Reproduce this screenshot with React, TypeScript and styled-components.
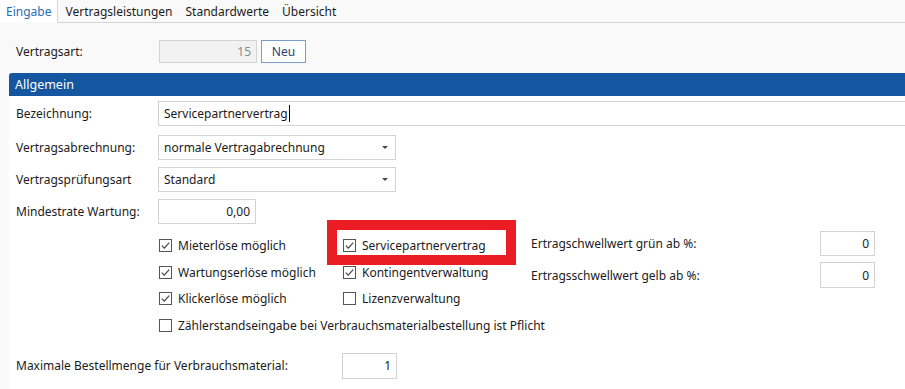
import React from "react";
import styled, { createGlobalStyle } from "styled-components";

const Global = createGlobalStyle`
  html, body { margin: 0; padding: 0; background: #f9f9f9; }
  body { font-family: "Noto Sans", "Open Sans", sans-serif; font-size: 12px; color: #1b1b1b; }
  * { box-sizing: border-box; }
`;

const Page = styled.div`
  width: 905px;
  height: 389px;
  overflow: hidden;
  display: flex;
  flex-direction: column;
`;

const TabBar = styled.div`
  display: flex;
  height: 23px;
  align-items: stretch;
`;

const Tab = styled.div<{ $active?: boolean }>`
  padding: 0 6px 0 ${(p) => (p.$active ? "6px" : "7px")};
  display: flex;
  align-items: center;
  background: ${(p) => (p.$active ? "#ffffff" : "transparent")};
  color: ${(p) => (p.$active ? "#2b6cb8" : "#1b1b1b")};
  border-right: ${(p) => (p.$active ? "1px solid #d6d6d6" : "none")};
  border-bottom: ${(p) => (p.$active ? "1px solid transparent" : "1px solid #d6d6d6")};
`;

const TabFill = styled.div`
  flex: 1;
  border-bottom: 1px solid #d6d6d6;
`;

const TopRow = styled.div`
  display: flex;
  align-items: center;
  padding: 17px 0 0 16px;
  height: 40px;
`;

const TopLabel = styled.div`
  width: 143px;
`;

const Field = styled.div<{ $w: string; $h?: number; $bg?: string; $align?: string; $color?: string }>`
  width: ${(p) => p.$w};
  height: ${(p) => p.$h ?? 25}px;
  border: 1px solid #d3d3d3;
  background: ${(p) => p.$bg ?? "#ffffff"};
  color: ${(p) => p.$color ?? "#1b1b1b"};
  display: flex;
  align-items: center;
  justify-content: ${(p) => (p.$align === "right" ? "flex-end" : "flex-start")};
  padding: 0 5px;
  flex-shrink: 0;
  white-space: nowrap;
`;

const NeuButton = styled.div`
  margin-left: 4px;
  width: 45px;
  height: 23px;
  border: 1px solid #7c9acb;
  background: #ffffff;
  color: #1e3f73;
  display: flex;
  align-items: center;
  justify-content: center;
`;

const Section = styled.div`
  margin: 10px 0 0 9px;
  flex: 1;
  display: flex;
  flex-direction: column;
`;

const Header = styled.div`
  height: 23px;
  background: #1457a0;
  color: #ffffff;
  border-top-left-radius: 3px;
  padding-left: 6px;
  display: flex;
  align-items: center;
  font-size: 12.5px;
`;

const Content = styled.div`
  flex: 1;
  background: #ffffff;
  padding: 5px 0 0 7px;
  display: flex;
  flex-direction: column;
  position: relative;
`;

const Row = styled.div<{ $mt?: number }>`
  display: flex;
  align-items: center;
  margin-top: ${(p) => p.$mt ?? 0}px;
`;

const Label = styled.div<{ $w?: number }>`
  width: ${(p) => p.$w ?? 142}px;
  flex-shrink: 0;
  white-space: nowrap;
`;

const Caret = styled.span`
  display: inline-block;
  width: 1px;
  height: 17px;
  background: #000;
  margin-left: 1px;
`;

const Arrow = styled.span`
  margin-left: auto;
  margin-right: 2px;
  width: 0;
  height: 0;
  border-left: 3px solid transparent;
  border-right: 3px solid transparent;
  border-top: 3px solid #4a4a4a;
`;

const CheckArea = styled.div`
  display: flex;
  margin-top: 8px;
  padding-left: 143px;
`;

const CheckGrid = styled.div`
  display: grid;
  grid-template-columns: 184px 188px;
  grid-auto-rows: 26.7px;
`;

const CheckItem = styled.div<{ $span?: boolean }>`
  display: flex;
  align-items: center;
  gap: 6px;
  white-space: nowrap;
  grid-column: ${(p) => (p.$span ? "1 / -1" : "auto")};
`;

const ThresholdCol = styled.div`
  display: flex;
  flex-direction: column;
  gap: 6px;
  margin-top: -1px;
`;

const ThresholdRow = styled.div`
  display: flex;
  align-items: center;
`;

const Highlight = styled.div`
  position: absolute;
  left: 318px;
  top: 124px;
  width: 189px;
  height: 45px;
  border: 10px solid #ec1c24;
  pointer-events: none;
`;

const Check = ({ checked }: { checked: boolean }) => (
  <svg width="13" height="13" viewBox="0 0 13 13" style={{ flexShrink: 0 }}>
    <rect x="0.5" y="0.5" width="12" height="12" fill="#fff" stroke="#555" />
    {checked && <path d="M2.8 6.6 L5.3 9.1 L10.2 3.6" fill="none" stroke="#444" strokeWidth="1.2" />}
  </svg>
);

export default function App() {
  return (
    <Page>
      <Global />
      <TabBar>
        <Tab $active>Eingabe</Tab>
        <Tab>Vertragsleistungen</Tab>
        <Tab>Standardwerte</Tab>
        <Tab>Übersicht</Tab>
        <TabFill />
      </TabBar>
      <TopRow>
        <TopLabel>Vertragsart:</TopLabel>
        <Field $w="98px" $h={23} $bg="#f2f2f2" $align="right" $color="#8a8a8a">15</Field>
        <NeuButton>Neu</NeuButton>
      </TopRow>
      <Section>
        <Header>Allgemein</Header>
        <Content>
          <Row>
            <Label>Bezeichnung:</Label>
            <Field $w="760px">Servicepartnervertrag<Caret /></Field>
          </Row>
          <Row $mt={9}>
            <Label>Vertragsabrechnung:</Label>
            <Field $w="238px">normale Vertragabrechnung<Arrow /></Field>
          </Row>
          <Row $mt={7}>
            <Label>Vertragsprüfungsart</Label>
            <Field $w="238px">Standard<Arrow /></Field>
          </Row>
          <Row $mt={7}>
            <Label>Mindestrate Wartung:</Label>
            <Field $w="98px" $align="right">0,00</Field>
          </Row>
          <CheckArea>
            <CheckGrid>
              <CheckItem><Check checked />Mieterlöse möglich</CheckItem>
              <CheckItem><Check checked />Servicepartnervertrag</CheckItem>
              <CheckItem><Check checked />Wartungserlöse möglich</CheckItem>
              <CheckItem><Check checked />Kontingentverwaltung</CheckItem>
              <CheckItem><Check checked />Klickerlöse möglich</CheckItem>
              <CheckItem><Check checked={false} />Lizenzverwaltung</CheckItem>
              <CheckItem $span><Check checked={false} />Zählerstandseingabe bei Verbrauchsmaterialbestellung ist Pflicht</CheckItem>
            </CheckGrid>
            <ThresholdCol>
              <ThresholdRow>
                <Label $w={289}>Ertragschwellwert grün ab %:</Label>
                <Field $w="55px" $align="right">0</Field>
              </ThresholdRow>
              <ThresholdRow>
                <Label $w={289}>Ertragsschwellwert gelb ab %:</Label>
                <Field $w="55px" $h={26} $align="right">0</Field>
              </ThresholdRow>
            </ThresholdCol>
          </CheckArea>
          <Row $mt={14}>
            <Label $w={326}>Maximale Bestellmenge für Verbrauchsmaterial:</Label>
            <Field $w="55px" $h={26} $align="right">1</Field>
          </Row>
          <Highlight />
        </Content>
      </Section>
    </Page>
  );
}
